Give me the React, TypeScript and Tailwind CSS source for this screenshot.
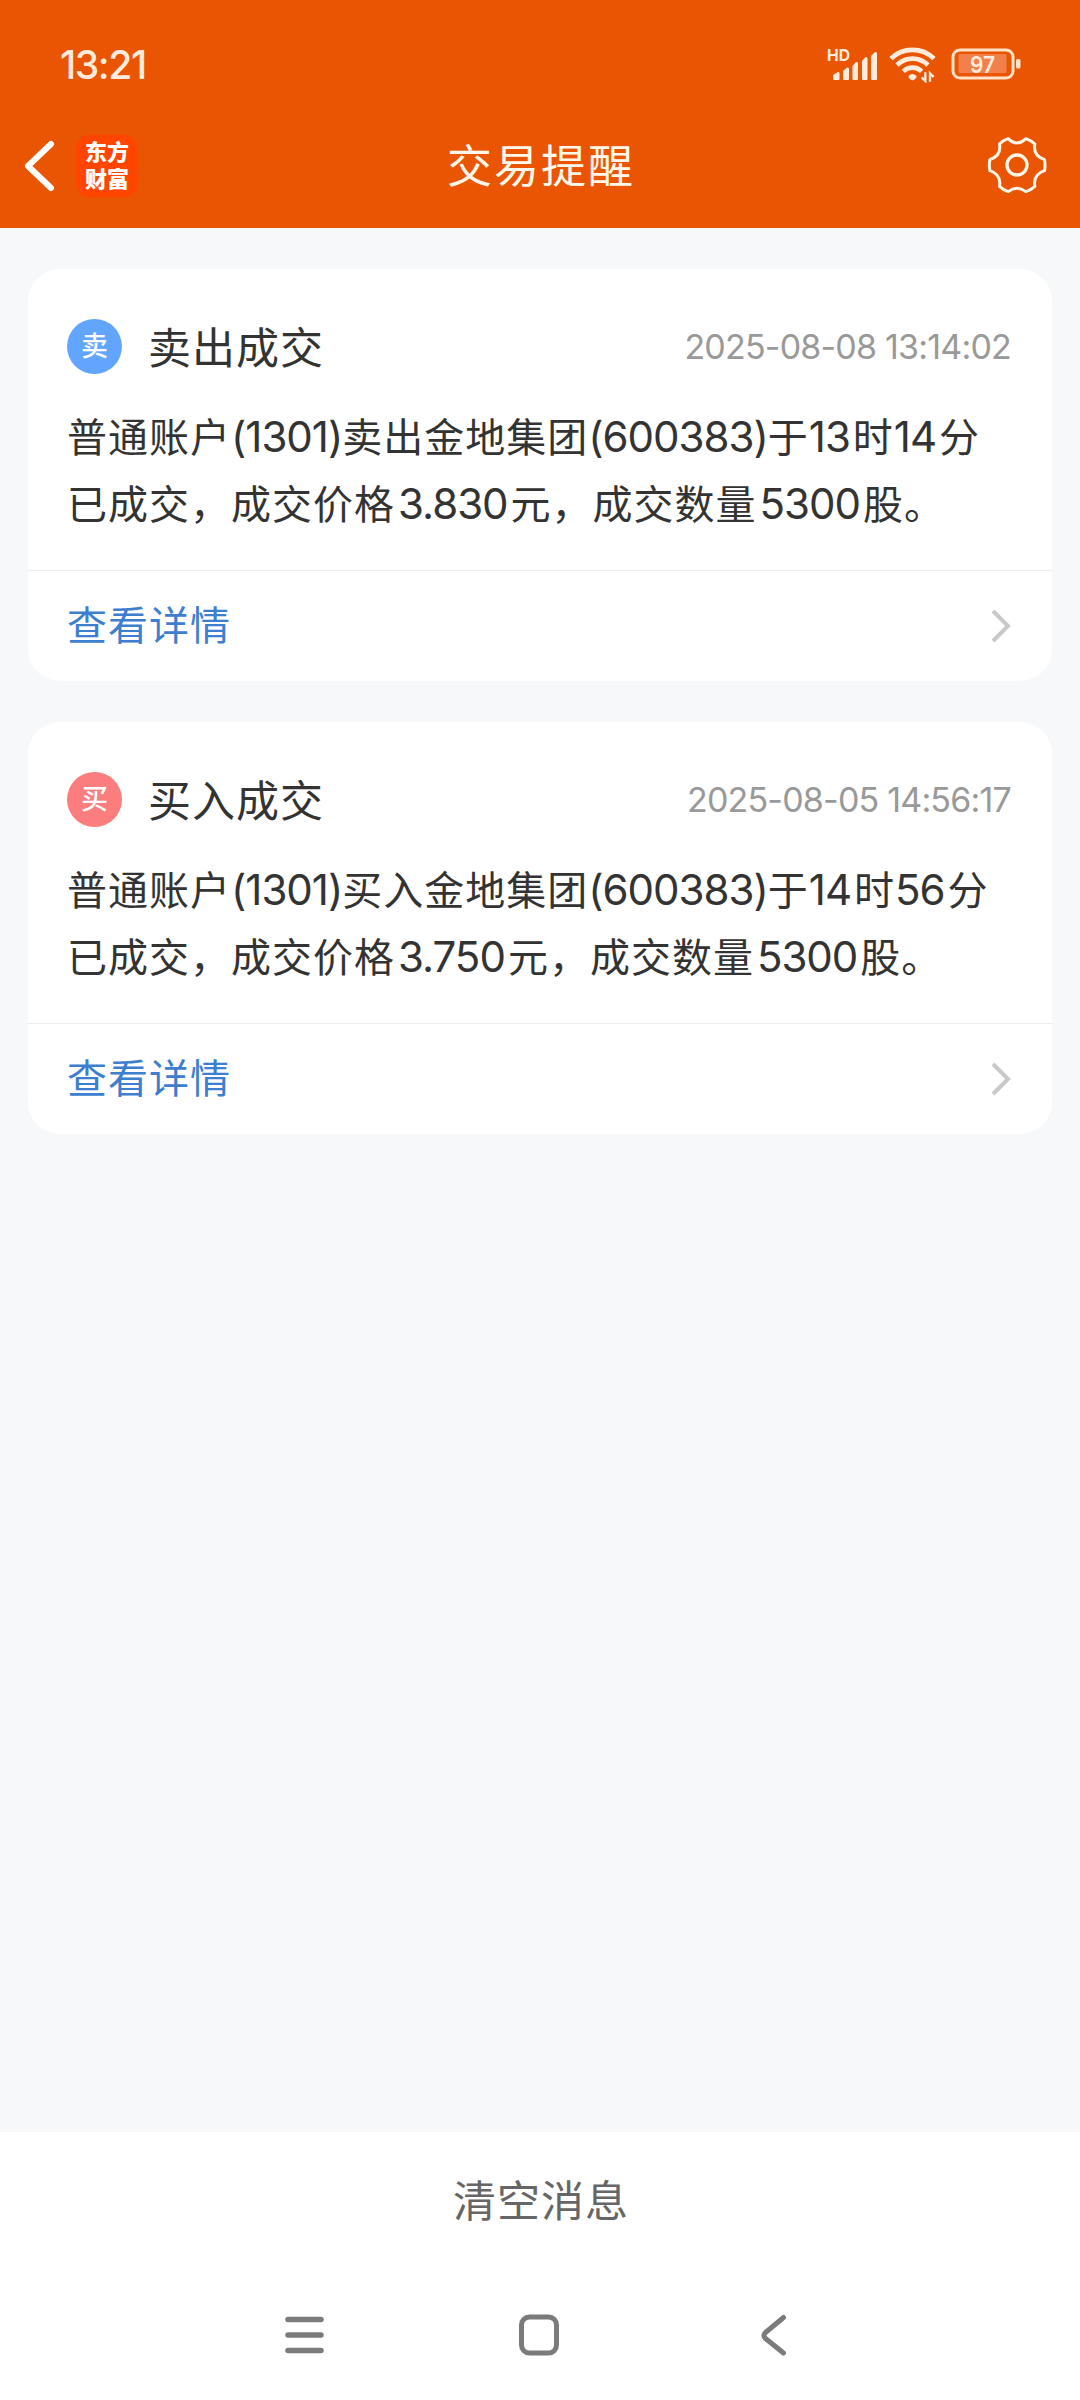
type Notice = {
  badge: string;
  badgeColor: string;
  title: string;
  time: string;
  lines: string[];
};

const notices: Notice[] = [
  {
    badge: "卖",
    badgeColor: "bg-[#62a5ff]",
    title: "卖出成交",
    time: "2025-08-08 13:14:02",
    lines: ["普通账户(1301)卖出金地集团(600383)于13时14分", "已成交，成交价格3.830元，成交数量5300股。"],
  },
  {
    badge: "买",
    badgeColor: "bg-[#fb7d7e]",
    title: "买入成交",
    time: "2025-08-05 14:56:17",
    lines: ["普通账户(1301)买入金地集团(600383)于14时56分", "已成交，成交价格3.750元，成交数量5300股。"],
  },
];

function SignalIcon() {
  return (
    <svg className="w-[52px] h-[46px]" viewBox="0 -6 52 46" fill="#ffecdc">
      <text x="1" y="14" fontSize="16.500" fontWeight="700" textLength="23" lengthAdjust="spacingAndGlyphs" fontFamily="Inter, sans-serif">HD</text>
      <path d="M7 32v-3q0-1.500 1.500-2l3.500-2q1.500 0 1.500 1v6q0 1-1 1h-4.500q-1 0-1-1z" />
      <path d="M17 32v-8l4-3.500q2 0 2 1v10.500q0 1-1 1h-4q-1 0-1-1z" />
      <path d="M26.500 32v-13l3.500-4q2 0 2 1v16q0 1-1 1h-3.500q-1 0-1-1z" />
      <path d="M36 32v-18l3.500-4q2 0 2 1v21q0 1-1 1h-3.500q-1 0-1-1z" />
      <path d="M45 32v-23l4-4q2 0 2 1v26q0 1-1 1h-4q-1 0-1-1z" />
    </svg>
  );
}

function WifiIcon() {
  return (
    <svg className="w-[50px] h-[38px]" viewBox="262 76 150 114" fill="none" stroke="#ffecdc" strokeWidth="14">
      <path d="M274 117a92 92 0 0 1 129 0" />
      <path d="M292 136a66 66 0 0 1 93 0" />
      <path d="M311 155a39 39 0 0 1 55 0" />
      <path d="M326 170q12-14 25 0q0 4-4 7q-9 10-17 0q-4-3-4-7z" fill="#ffecdc" stroke="none" />
      <path d="M377 158v26l-11-11M391 186v-25l11 11" strokeWidth="7" />
    </svg>
  );
}

function BatteryIcon() {
  return (
    <svg className="w-[70px] h-[32px]" viewBox="0 0 70 32">
      <rect x="2" y="2" width="60" height="28" rx="7" fill="none" stroke="#ffe3c8" strokeWidth="3" />
      <rect x="7.500" y="6" width="48" height="19" rx="1.500" fill="#f2804a" />
      <rect x="65" y="11" width="4.500" height="9.500" rx="1.500" fill="#ffe3c8" />
      <text x="19" y="24.500" fontSize="23.500" fontWeight="600" textLength="25" fill="#ffecdc" fontFamily="Inter, sans-serif" lengthAdjust="spacingAndGlyphs">97</text>
    </svg>
  );
}

function GearIcon() {
  return (
    <svg className="w-[60px] h-[58px]" viewBox="562.500 346 180 174" fill="none" stroke="#fff6e8" strokeWidth="9" strokeLinejoin="round">
      <path d="M626 354q-15 5-26 16c4 22-5 39-29 47q-3 16 0 33c24 8 33 25 29 47q11 11 26 16q26-20 53 0q15-5 27-16c-4-22 5-39 29-47q3-17 0-33c-24-8-33-25-29-47q-12-11-27-16q-27 26-53 0z" />
      <circle cx="652.500" cy="433" r="30" strokeWidth="10" />
    </svg>
  );
}

// numbers in brackets sit tight, short ones (hours, minutes) only get a gap after
function numberGap(part: string) {
  if (part.startsWith("(")) return "";
  return part.length > 2 ? "mx-[3px]" : "mr-[3px]";
}

function Line({ text }: { text: string }) {
  return (
    <p className="whitespace-nowrap">
      {text.split(/([0-9.()]+)/).map((part, i) =>
        i % 2 ? (
          <span key={i} className={`text-[42px] tracking-[-1px] ${numberGap(part)}`}>{part}</span>
        ) : (
          <span key={i}>{part}</span>
        )
      )}
    </p>
  );
}

function Card({ item }: { item: Notice }) {
  return (
    <section className="h-[412px] rounded-[32px] bg-white flex flex-col">
      <div className="flex-1 px-[39px] pt-[46px]">
        <div className="flex items-center h-[62px]">
          <span className={`size-[55px] rounded-full flex items-center justify-center text-white text-[27px] font-medium leading-none ${item.badgeColor}`}>
            {item.badge}
          </span>
          <h2 className="ml-[26px] pt-[4px] text-[43px] leading-[62px] tracking-[1px] text-[#333]">{item.title}</h2>
          <time className="ml-auto mr-[2px] text-[34px] tracking-[-0.8px] text-[#999]">{item.time}</time>
        </div>
        <div className="mt-[27px] text-[40px] leading-[66px] tracking-[1px] text-[#333]">
          {item.lines.map((line) => (
            <Line key={line} text={line} />
          ))}
        </div>
      </div>
      <a className="h-[111px] border-t border-[#ececec] pl-[39px] pr-[41px] flex items-center justify-between text-[40px] tracking-[1px] text-[#3d7ecf]">
        查看详情
        <svg className="w-[20px] h-[34px]" viewBox="0 0 20 34" fill="none" stroke="#c9c9c9" strokeWidth="4">
          <path d="M2 2l15 15l-15 15" />
        </svg>
      </a>
    </section>
  );
}

export default function App() {
  return (
    <main className="w-[1080px] h-[2400px] flex flex-col bg-[#f6f8fa] font-['Inter','Noto_Sans_CJK_SC',sans-serif]">
      <header className="h-[228px] bg-[#ea5504]">
        <div className="h-[128px] pl-[60px] pr-[59px] flex items-center justify-between">
          <span className="text-[39px] font-medium leading-none tracking-[-1.4px] text-[#ffecdc]">13:21</span>
          <div className="flex items-center">
            <SignalIcon />
            <div className="ml-[9px] mr-[14px]">
              <WifiIcon />
            </div>
            <BatteryIcon />
          </div>
        </div>
        <div className="h-[76px] pl-[24px] pr-[33px] flex items-center">
          <div className="w-[300px] flex items-center">
            <svg className="w-[32px] h-[54px]" viewBox="0 0 32 54" fill="none" stroke="#fff" strokeWidth="6" strokeLinecap="round" strokeLinejoin="round">
              <path d="M27 5l-23 22l23 22" />
            </svg>
            <div className="ml-[20px] size-[62px] rounded-[14px] bg-[#ff4500] text-white text-[22px] font-black leading-[27px] flex flex-col items-center justify-center">
              <span>东方</span>
              <span>财富</span>
            </div>
          </div>
          <h1 className="flex-1 pl-[11px] text-center text-[45px] leading-none tracking-[2px] text-[#fff8ea]">交易提醒</h1>
          <div className="w-[300px] pb-[3px] flex justify-end">
            <GearIcon />
          </div>
        </div>
      </header>

      <div className="flex-1 px-[28px] pt-[41px] flex flex-col gap-[41px]">
        {notices.map((item) => (
          <Card key={item.time} item={item} />
        ))}
      </div>

      <footer className="h-[268px] bg-white">
        <button className="w-full h-[138px] pl-[2px] text-center text-[43px] tracking-[1px] text-[#666]">清空消息</button>
        <nav className="h-[130px] flex justify-center items-center">
          <svg className="w-[520px] h-[50px]" viewBox="0 0 520 50" fill="none" stroke="#7b7b7b" strokeWidth="5.500" strokeLinecap="round" strokeLinejoin="round">
            <path d="M8 9.500h33M8 25h33M8 40.500h33" />
            <rect x="241.500" y="7" width="35" height="36" rx="8" strokeWidth="5" />
            <path d="M503.500 7.500l-18 15q-3 3 0 6l18 14.500" strokeWidth="5" />
          </svg>
        </nav>
      </footer>
    </main>
  );
}
